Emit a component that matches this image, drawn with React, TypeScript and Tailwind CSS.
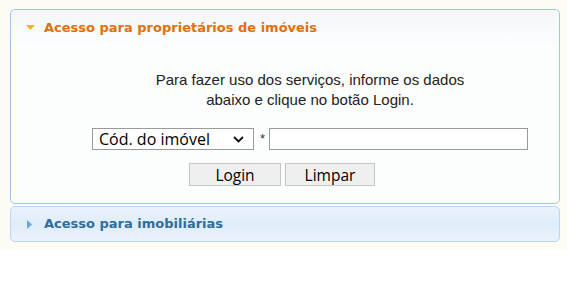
import React from "react";

export default function App() {
  return (
    <div className="w-[567px] h-[283px] bg-white">
      <div className="h-[250px] bg-[#fcfbf4] pt-[9px] pl-[10px]">
        <div className="w-[550px]">
          {/* Panel 1 */}
          <div className="rounded-[5px] border border-[#9ec6e8] bg-[#fcfdfd]">
            <div className="h-[34px] pt-[1px] flex items-center rounded-t-[5px] bg-gradient-to-b from-[#f3f7fa] to-[#fbfdfd]">
              <svg width="9" height="5" viewBox="0 0 9 5" className="ml-[15px] mr-[9px]">
                <polygon points="0,0 9,0 4.5,5" fill="#f5b324" />
              </svg>
              <span className="text-[13px] font-bold text-[#e17009] [font-family:'DejaVu_Sans',Verdana,sans-serif]">
                Acesso para proprietários de imóveis
              </span>
            </div>
            <div className="pt-[26px] pb-[17px] [font-family:'Liberation_Sans',Arial,sans-serif]">
              <div className="ml-[99px] w-[400px] text-center text-[15px] leading-[20px] text-[#222]">
                Para fazer uso dos serviços, informe os dados
                <br />
                abaixo e clique no botão Login.
              </div>
              <div className="mt-[18px] ml-[81px] flex items-center">
                <div className="relative w-[162px] h-[22px] border border-[#9a9a9a] bg-white flex items-center">
                  <span className="pl-[6px] text-[16px] leading-[20px] text-black [font-family:'Open_Sans',sans-serif]">
                    Cód. do imóvel
                  </span>
                  <svg width="11" height="7" viewBox="0 0 11 7" className="absolute right-[9px] top-[7px]">
                    <polyline points="1,1 5.5,5.5 10,1" fill="none" stroke="#111" strokeWidth="1.8" />
                  </svg>
                </div>
                <span className="ml-[6px] text-[13px] text-[#333]">*</span>
                <div className="ml-[4px] w-[259px] h-[22px] border border-[#9a9a9a] bg-white" />
              </div>
              <div className="mt-[13px] ml-[178px] flex gap-[4px]">
                <div className="w-[92px] h-[23px] border border-[#c6c6c6] bg-[#efefef] flex items-center justify-center text-[15.5px] leading-[20px] text-black [font-family:'Open_Sans',sans-serif]">
                  Login
                </div>
                <div className="w-[90px] h-[23px] border border-[#c6c6c6] bg-[#efefef] flex items-center justify-center text-[15.5px] leading-[20px] text-black [font-family:'Open_Sans',sans-serif]">
                  Limpar
                </div>
              </div>
            </div>
          </div>
          {/* Panel 2 */}
          <div className="mt-[2px] h-[36px] rounded-[5px] border border-[#bad5ee] bg-gradient-to-b from-[#e9f3fc] via-[#dfecf9] to-[#e9f3fc] flex items-center">
            <svg width="5" height="9" viewBox="0 0 5 9" className="ml-[16px] mr-[12px]">
              <polygon points="0,0 5,4.5 0,9" fill="#6fa6d6" />
            </svg>
            <span className="text-[13px] font-bold text-[#2e6e9e] [font-family:'DejaVu_Sans',Verdana,sans-serif]">
              Acesso para imobiliárias
            </span>
          </div>
        </div>
      </div>
    </div>
  );
}
